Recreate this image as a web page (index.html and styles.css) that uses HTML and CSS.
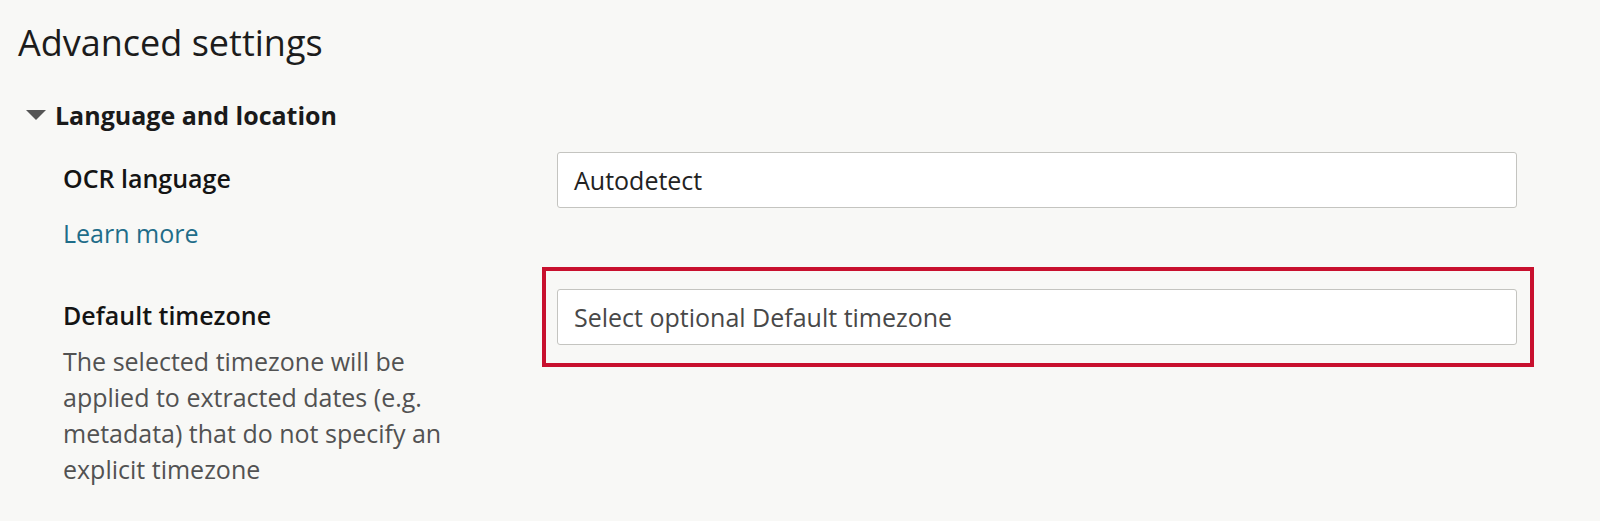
FILE: index.html
```html
<!DOCTYPE html>
<html lang="en">
<head>
  <meta charset="UTF-8" />
  <meta name="viewport" content="width=device-width, initial-scale=1.0" />
  <title>Advanced settings</title>
  <link rel="stylesheet" href="styles.css">
</head>
<body>

  <main class="settings">
    <h1 class="settings-title">Advanced settings</h1>

    <!-- Language and location -->
    <section class="grupo">
      <h2 class="grupo-titulo"><span class="seta"></span>Language and location</h2>

      <div class="campo">
        <div class="campo-info">
          <label class="campo-label" for="ocr">OCR language</label>
          <a class="campo-link" href="#">Learn more</a>
        </div>
        <div class="campo-controle">
          <div id="ocr" class="seletor">Autodetect</div>
        </div>
      </div>

      <div class="campo campo-tz">
        <div class="campo-info">
          <label class="campo-label" for="tz">Default timezone</label>
          <p class="campo-ajuda">The selected timezone will be applied to extracted dates (e.g. metadata) that do not specify an explicit timezone</p>
        </div>
        <div class="campo-controle">
          <div class="destaque">
            <div id="tz" class="seletor vazio">Select optional Default timezone</div>
          </div>
        </div>
      </div>
    </section>
  </main>

</body>
</html>
```

FILE: styles.css
```css
* {
  box-sizing: border-box;
}

body {
  margin: 0;
  font-family: "Open Sans", "Noto Sans", sans-serif;
  background-color: #f8f8f6;
  color: #1a1a1a;
}

.settings {
  padding: 0 18px;
}

.settings-title {
  margin: 19px 0 0;
  font-size: 36px;
  line-height: 48px;
  font-weight: 400;
  color: #1c1c1c;
}

.grupo-titulo {
  display: flex;
  align-items: center;
  gap: 9px;
  margin: 31px 0 0;
  padding-left: 8px;
  font-size: 25px;
  line-height: 34px;
  font-weight: 700;
  color: #1a1a1a;
}

.seta {
  width: 0;
  height: 0;
  border-left: 10px solid transparent;
  border-right: 10px solid transparent;
  border-top: 10px solid #555;
}

.campo {
  display: grid;
  grid-template-columns: 494px 960px;
  margin-top: 20px;
  padding-left: 45px;
}

.campo-tz {
  margin-top: 39px;
}

.campo-info {
  display: flex;
  flex-direction: column;
  align-items: flex-start;
  padding-top: 9px;
}

.campo-label {
  font-size: 25px;
  line-height: 34px;
  font-weight: 600;
  color: #141414;
}

.campo-link {
  margin-top: 21px;
  font-size: 25px;
  line-height: 34px;
  color: #1f6d89;
  text-decoration: none;
}

.campo-ajuda {
  max-width: 400px;
  margin: 11px 0 0;
  font-size: 25px;
  line-height: 36px;
  color: #525252;
}

.seletor {
  height: 56px;
  padding: 0 16px;
  display: flex;
  align-items: center;
  background: #fff;
  border: 1px solid #c4c4c0;
  border-radius: 3px;
  font-size: 25px;
  color: #222;
}

.seletor.vazio {
  color: #484848;
}

.destaque {
  margin: -22px -17px 0 -15px;
  padding: 18px 13px 18px 11px;
  border: 4px solid #c8102e;
}
```
